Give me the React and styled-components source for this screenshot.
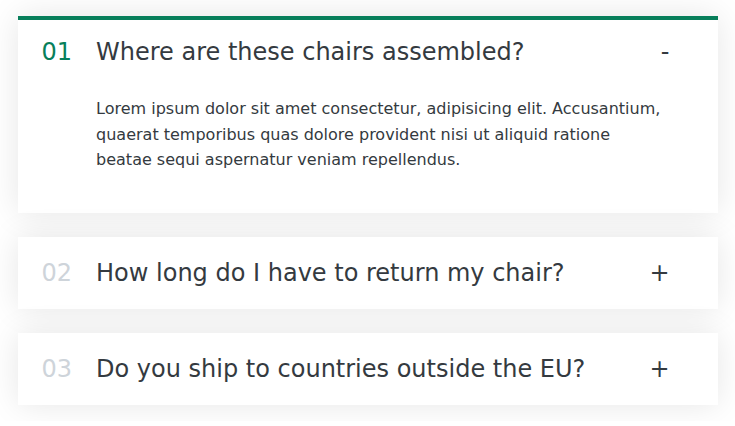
import React, { useState } from "react";
import styled, { createGlobalStyle } from "styled-components";

const GlobalStyle = createGlobalStyle`
  * {
    margin: 0;
    padding: 0;
    box-sizing: border-box;
  }
  body {
    font-family: "DejaVu Sans", "Noto Sans", sans-serif;
    color: #343a40;
    background-color: #fff;
    line-height: 1;
  }
`;

const Accordion = styled.div`
  width: 700px;
  margin: 16px auto;
  display: flex;
  flex-direction: column;
  gap: 24px;
`;

const Item = styled.div`
  background-color: #fff;
  padding: 24px 48px 24px 24px;
  display: grid;
  grid-template-columns: auto 1fr auto;
  column-gap: 24px;
  row-gap: 32px;
  align-items: center;
  cursor: pointer;
  box-shadow: ${(p) => (p.$open ? "inset 0 4px 0 #087f5b, " : "")}0 0 32px rgba(0, 0, 0, 0.1);
`;

const Number = styled.p`
  font-size: 24px;
  font-weight: 500;
  color: ${(p) => (p.$open ? "#087f5b" : "#ced4da")};
`;

const Title = styled.p`
  font-size: 24px;
  font-weight: 500;
`;

const Icon = styled.span`
  font-size: 24px;
  font-weight: 500;
  justify-self: end;
`;

const ContentBox = styled.div`
  grid-column: 2 / -1;
  padding-bottom: 16px;
  font-size: 16px;
  line-height: 1.6;
`;

const faqs = [
  {
    title: "Where are these chairs assembled?",
    text: "Lorem ipsum dolor sit amet consectetur, adipisicing elit. Accusantium, quaerat temporibus quas dolore provident nisi ut aliquid ratione beatae sequi aspernatur veniam repellendus.",
  },
  {
    title: "How long do I have to return my chair?",
    text: "Pariatur recusandae dignissimos fuga voluptas unde optio nesciunt commodi beatae, explicabo natus.",
  },
  {
    title: "Do you ship to countries outside the EU?",
    text: "Excepturi velit laborum, perspiciatis nemo perferendis reiciendis aliquam possimus dolor sed! Dolore laborum ducimus veritatis facere molestias!",
  },
];

function AccordionItem({ num, title, text, open, onToggle }) {
  return (
    <Item $open={open} onClick={onToggle}>
      <Number $open={open}>{num < 9 ? `0${num + 1}` : num + 1}</Number>
      <Title>{title}</Title>
      <Icon>{open ? "-" : "+"}</Icon>
      {open && <ContentBox>{text}</ContentBox>}
    </Item>
  );
}

export default function App() {
  const [curOpen, setCurOpen] = useState(0);

  return (
    <>
      <GlobalStyle />
      <Accordion>
        {faqs.map((el, i) => (
          <AccordionItem
            key={el.title}
            num={i}
            title={el.title}
            text={el.text}
            open={curOpen === i}
            onToggle={() => setCurOpen(curOpen === i ? null : i)}
          />
        ))}
      </Accordion>
    </>
  );
}
